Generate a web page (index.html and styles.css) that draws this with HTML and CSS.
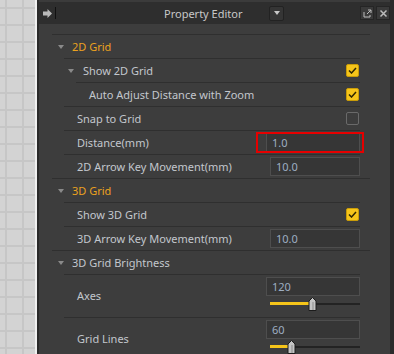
FILE: index.html
```html
<!DOCTYPE html>
<html>
<head>
<meta charset="utf-8">
<link rel="stylesheet" href="styles.css">
</head>
<body>
<div class="canvas"></div>
<div class="strip"></div>
<div class="panel">
  <div class="titlebar">
    <svg class="pin" width="9" height="9" viewBox="0 0 9 9"><path d="M0 2.5h4.5V0L9 4.5 4.5 9V6.5H0z" fill="#b9b9b9"/></svg>
    <span class="vline"></span>
    <span class="title">Property Editor</span>
    <span class="dd"><svg width="6" height="4" viewBox="0 0 6 4"><path d="M0 0h6L3 4z" fill="#c8c8c8"/></svg></span>
    <span class="spacer"></span>
    <span class="tbtn"><svg width="11" height="11" viewBox="0 0 11 11"><path d="M2 4v5h6V7" fill="none" stroke="#bdbdbd" stroke-width="1"/><path d="M5 6l4-4M6 2h3v3" fill="none" stroke="#bdbdbd" stroke-width="1"/></svg></span>
    <span class="tbtn"><svg width="11" height="11" viewBox="0 0 11 11"><path d="M2.5 2.5l6 6M8.5 2.5l-6 6" stroke="#bdbdbd" stroke-width="1.5"/></svg></span>
  </div>
  <div class="body">
    <div class="group">
      <div class="head"><span class="caret"></span><span class="hlabel orange">2D Grid</span></div>
      <div class="kids">
        <div class="row"><span class="caret c2"></span><span class="label">Show 2D Grid</span><span class="check on"><svg width="9" height="7" viewBox="0 0 9 7"><path d="M1 3.5l2.5 2.5L8 1" fill="none" stroke="#2e2600" stroke-width="1.5"/></svg></span></div>
        <div class="kids">
          <div class="row"><span class="label lp">Auto Adjust Distance with Zoom</span><span class="check on"><svg width="9" height="7" viewBox="0 0 9 7"><path d="M1 3.5l2.5 2.5L8 1" fill="none" stroke="#2e2600" stroke-width="1.5"/></svg></span></div>
        </div>
        <div class="row"><span class="label lp">Snap to Grid</span><span class="check"></span></div>
        <div class="row"><span class="label lp">Distance(mm)</span><span class="field wide hl">1.0<span class="mark"></span></span></div>
        <div class="row"><span class="label lp">2D Arrow Key Movement(mm)</span><span class="field">10.0</span></div>
      </div>
    </div>
    <div class="group">
      <div class="head"><span class="caret"></span><span class="hlabel orange">3D Grid</span></div>
      <div class="kids">
        <div class="row"><span class="label lp">Show 3D Grid</span><span class="check on"><svg width="9" height="7" viewBox="0 0 9 7"><path d="M1 3.5l2.5 2.5L8 1" fill="none" stroke="#2e2600" stroke-width="1.5"/></svg></span></div>
        <div class="row"><span class="label lp">3D Arrow Key Movement(mm)</span><span class="field">10.0</span></div>
      </div>
    </div>
    <div class="group">
      <div class="head"><span class="caret"></span><span class="hlabel">3D Grid Brightness</span></div>
      <div class="kids">
        <div class="row tall"><span class="label lp">Axes</span>
          <div class="valcol">
            <span class="field wide">120</span>
            <div class="slider"><div class="fill" style="width:42px"></div><div class="rest"></div>
              <svg class="knob" style="left:38px" width="9" height="14" viewBox="0 0 9 14"><path d="M4.5 0.5L8 4v9.5H1V4z" fill="#c4c4c4" stroke="#1c1c1c" stroke-width="1"/><path d="M5 5v8" stroke="#8a8a8a" stroke-width="1"/></svg>
            </div>
          </div>
        </div>
        <div class="row tall"><span class="label lp">Grid Lines</span>
          <div class="valcol">
            <span class="field wide">60</span>
            <div class="slider"><div class="fill" style="width:21px"></div><div class="rest"></div>
              <svg class="knob" style="left:17px" width="9" height="14" viewBox="0 0 9 14"><path d="M4.5 0.5L8 4v9.5H1V4z" fill="#c4c4c4" stroke="#1c1c1c" stroke-width="1"/><path d="M5 5v8" stroke="#8a8a8a" stroke-width="1"/></svg>
            </div>
          </div>
        </div>
      </div>
    </div>
  </div>
</div>
</body>
</html>
```

FILE: styles.css
```css
html, body {
  margin: 0;
  padding: 0;
}
body {
  width: 394px;
  height: 354px;
  overflow: hidden;
  display: flex;
  font-family: "Noto Sans", "Liberation Sans", sans-serif;
  font-size: 11px;
  color: #c3c7cd;
}
.canvas {
  width: 35px;
  flex: none;
  background-color: #d3d3d3;
  background-image:
    linear-gradient(to right, #c6c6c6 2px, transparent 2px),
    linear-gradient(to bottom, #c6c6c6 2px, transparent 2px);
  background-size: 17px 17px;
  background-position: 5px 7px;
}
.strip {
  width: 2px;
  flex: none;
  background: #f0f0f0;
}
.panel {
  flex: 1;
  display: flex;
  flex-direction: column;
  background: #3d3d3d;
  border-left: 2px solid #2a2a2a;
  border-right: 4px solid #2b2b2b;
}
.titlebar {
  height: 22px;
  flex: none;
  border-top: 2px solid #3b3b3b;
  background: #2e2e2e;
  display: flex;
  align-items: center;
}
.pin {
  margin-left: 4px;
  flex: none;
}
.vline {
  width: 1px;
  height: 12px;
  background: #111;
  margin-left: 3px;
  flex: none;
}
.title {
  width: 213px;
  box-sizing: border-box;
  padding-left: 108px;
  flex: none;
  color: #c8c8c8;
  white-space: nowrap;
}
.dd {
  width: 13px;
  height: 13px;
  border: 1px solid #222;
  border-radius: 2px;
  background: #353535;
  display: flex;
  align-items: center;
  justify-content: center;
  flex: none;
}
.spacer {
  flex: 1;
}
.tbtn {
  width: 12px;
  height: 12px;
  border: 1px solid #252525;
  background: #3a3a3a;
  display: flex;
  align-items: center;
  justify-content: center;
  margin-left: 2px;
  flex: none;
}
.body {
  flex: 1;
  padding: 10px 20px 0 13px;
}
.group {
  border-top: 1px solid #2f2f2f;
}
.head {
  height: 23px;
  display: flex;
  align-items: center;
  padding-left: 6px;
}
.caret {
  width: 0;
  height: 0;
  border-left: 3px solid transparent;
  border-right: 3px solid transparent;
  border-top: 4px solid #8a8a8a;
  flex: none;
  margin-right: 8px;
}
.hlabel {
  color: #c3c7cd;
}
.orange {
  color: #eca21f;
}
.kids {
  margin-left: 12px;
}
.group > .kids {
  margin-right: 10px;
}
.row {
  height: 23px;
  border-top: 1px solid #2f2f2f;
  display: flex;
  align-items: center;
}
.caret.c2 {
  margin-left: 4px;
  margin-right: 9px;
}
.label {
  flex: 1;
  white-space: nowrap;
}
.lp {
  padding-left: 13px;
}
.check {
  width: 11px;
  height: 11px;
  border: 1px solid #6a6a6a;
  border-radius: 2px;
  margin-right: 1px;
  display: flex;
  align-items: center;
  justify-content: center;
  flex: none;
}
.check.on {
  background: #f6c51a;
  border-color: #c99c08;
}
.field {
  width: 90px;
  height: 19px;
  box-sizing: border-box;
  border: 1px solid #4e4e4e;
  background: #363636;
  color: #9eaec2;
  padding-left: 5px;
  display: flex;
  align-items: center;
  flex: none;
  position: relative;
}
.field.wide {
  width: 94px;
}
.mark {
  position: absolute;
  left: -11px;
  top: -2px;
  width: 104px;
  height: 17px;
  border: 2px solid #e60000;
}
.tall {
  height: 42px;
  align-items: flex-start;
}
.tall .label {
  align-self: center;
  padding-bottom: 2px;
}
.valcol {
  width: 94px;
  padding-top: 2px;
  display: flex;
  flex-direction: column;
}
.slider {
  position: relative;
  height: 15px;
  margin-left: 4px;
  display: flex;
  align-items: center;
}
.fill {
  height: 3px;
  background: #f6c51a;
  flex: none;
}
.rest {
  flex: 1;
  height: 2px;
  background: #232323;
}
.knob {
  position: absolute;
  top: 1px;
}
```
